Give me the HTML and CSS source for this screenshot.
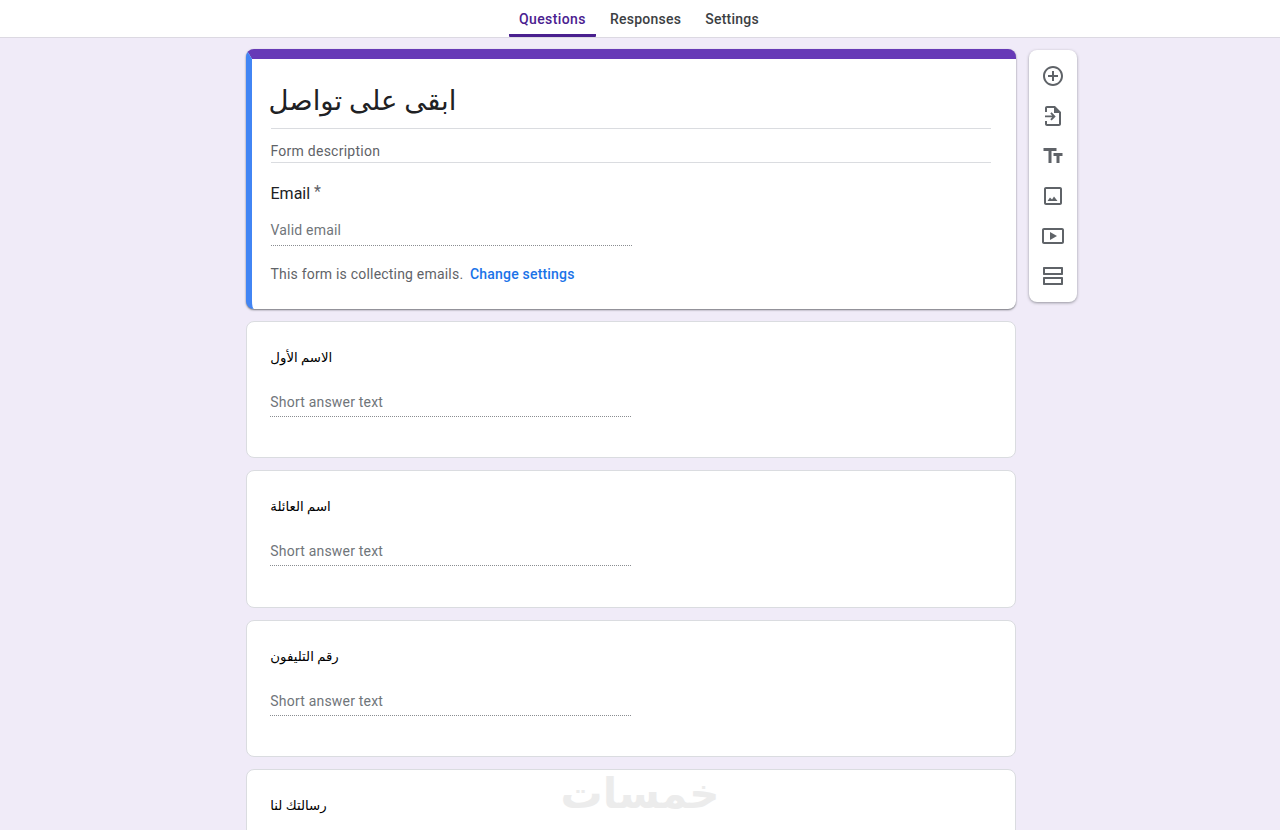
FILE: index.html
```html
<!DOCTYPE html>
<html lang="en">
<head>
    <meta charset="UTF-8">
    <meta name="viewport" content="width=device-width, initial-scale=1.0">
    <title>ابقى على تواصل - Google Forms</title>
    <link rel="stylesheet" href="styles.css">
</head>
<body>

<header class="tabs">
    <a class="tab active">Questions</a>
    <a class="tab">Responses</a>
    <a class="tab">Settings</a>
</header>

<main class="editor">
    <div class="cards">
        <section class="card title-card">
            <h1 class="form-title" dir="rtl"><span class="form-title-text">ابقى على تواصل</span></h1>
            <div class="form-desc">Form description</div>
            <div class="email-label">Email <span class="star">*</span></div>
            <div class="answer email-answer">Valid email</div>
            <p class="collecting">This form is collecting emails. <a class="link">Change settings</a></p>
        </section>

        <section class="card question">
            <div class="q-title" dir="rtl">الاسم الأول</div>
            <div class="answer">Short answer text</div>
        </section>

        <section class="card question">
            <div class="q-title" dir="rtl">اسم العائلة</div>
            <div class="answer">Short answer text</div>
        </section>

        <section class="card question">
            <div class="q-title" dir="rtl">رقم التليفون</div>
            <div class="answer">Short answer text</div>
        </section>

        <section class="card question">
            <div class="q-title" dir="rtl">رسالتك لنا</div>
        </section>
    </div>

    <aside class="toolbar">
        <svg class="tool" viewBox="0 0 24 24"><path d="M13 7h-2v4H7v2h4v4h2v-4h4v-2h-4V7zm-1-5C6.48 2 2 6.48 2 12s4.48 10 10 10 10-4.48 10-10S17.52 2 12 2zm0 18c-4.41 0-8-3.59-8-8s3.59-8 8-8 8 3.59 8 8-3.59 8-8 8z"/></svg>
        <svg class="tool" viewBox="0 0 24 24"><path d="M14 2H6c-1.100 0-2 .9-2 2v4h2V4h7v5h5v11H6v-3H4v3c0 1.100.9 2 2 2h12c1.100 0 2-.9 2-2V8l-6-6z"/><path d="M4 12h7.200l-1.900-1.900 1.300-1.300 4.100 4.100-4.100 4.100-1.300-1.300 1.900-1.900H4z" transform="translate(0 -.5)"/></svg>
        <svg class="tool" viewBox="0 0 24 24"><path d="M2.500 4v3h5v12h3V7h5V4h-13zm19 5h-9v3h3v7h3v-7h3V9z"/></svg>
        <svg class="tool" viewBox="0 0 24 24"><path d="M19 3H5c-1.100 0-2 .9-2 2v14c0 1.100.9 2 2 2h14c1.100 0 2-.9 2-2V5c0-1.100-.9-2-2-2zm0 16H5V5h14v14z"/><path d="M6.500 17l2.500-3.500 2 2 2-3 3.500 4.500z"/></svg>
        <svg class="tool" viewBox="0 0 24 24"><path d="M21 4H3c-1.100 0-2 .9-2 2v12c0 1.100.9 2 2 2h18c1.100 0 2-.9 2-2V6c0-1.100-.9-2-2-2zm0 14H3V6h18v12z"/><path d="M9 8v8l7-4z"/></svg>
        <svg class="tool" viewBox="0 0 24 24"><path d="M3 3h18c.6 0 1 .4 1 1v6c0 .6-.4 1-1 1H3c-.6 0-1-.4-1-1V4c0-.6.4-1 1-1zm1 2v4h16V5H4zM3 13h18c.6 0 1 .4 1 1v6c0 .6-.4 1-1 1H3c-.6 0-1-.4-1-1v-6c0-.6.4-1 1-1zm1 2v4h16v-4H4z"/></svg>
    </aside>
</main>

<div class="watermark" dir="rtl">خمسات</div>

</body>
</html>
```

FILE: styles.css
```css
:root {
    --primary-color: #673ab7;
    --tab-active: #4a208f;
    --background-color: #f0ebf8;
    --line-color: #dadce0;
    --text-color: #202124;
    --muted-color: #5f6368;
    --font-family: Roboto, 'DejaVu Sans', sans-serif;
}

html {
    overflow: hidden;
}

body {
    font-family: var(--font-family);
    background-color: var(--background-color);
    color: var(--text-color);
    margin: 0;
    height: 830px;
    overflow: hidden;
}

.tabs {
    display: flex;
    justify-content: center;
    gap: 4px;
    height: 37px;
    padding-right: 2px;
    background-color: white;
    border-bottom: 1px solid #dcd9e2;
}

.tab {
    display: block;
    padding: 11px 10px 0;
    height: 26px;
    font-size: 14px;
    line-height: 16px;
    font-weight: 500;
    letter-spacing: 0.25px;
    color: #3c4043;
}

.tab.active {
    color: var(--tab-active);
    letter-spacing: 0.4px;
    border-bottom: 3px solid var(--tab-active);
    border-radius: 0 0 1px 1px;
    height: 23px;
}

.editor {
    display: flex;
    align-items: flex-start;
    gap: 13px;
    margin-left: 246px;
    padding-top: 11px;
}

.cards {
    display: flex;
    flex-direction: column;
    gap: 12px;
    width: 770px;
}

.card {
    background-color: white;
    border: 1px solid var(--line-color);
    border-radius: 8px;
    box-sizing: border-box;
    padding: 0 23.3px;
}

.title-card {
    height: 260px;
    padding: 10px 25px 0 18.5px;
    border: 0;
    border-top: 10px solid var(--primary-color);
    border-left: 6px solid #4285f4;
    box-shadow: 0 1px 2px rgba(60, 64, 67, 0.7);
}

.form-title {
    margin: 0;
    height: 60px;
    box-sizing: border-box;
    padding-top: 9px;
    font-size: 27.5px;
    line-height: 46px;
    font-weight: 400;
    direction: rtl;
    border-bottom: 1px solid var(--line-color);
    display: flex;
    justify-content: flex-end;
}

.form-title-text {
    margin-left: -2px;
}

.form-desc {
    height: 34px;
    box-sizing: border-box;
    padding-top: 14px;
    font-size: 14px;
    line-height: 16px;
    letter-spacing: 0.25px;
    color: var(--muted-color);
    border-bottom: 1px solid var(--line-color);
}

.email-label {
    margin-top: 19px;
    font-size: 16px;
    line-height: 20px;
}

.star {
    color: var(--muted-color);
    vertical-align: 2px;
}

.answer {
    width: 361px;
    height: 23px;
    box-sizing: border-box;
    font-size: 14px;
    line-height: 16px;
    letter-spacing: 0.2px;
    color: #70757a;
    border-bottom: 1px dotted #8a8d91;
}

.email-answer {
    height: 24px;
    margin-top: 18px;
}

.collecting {
    margin: 20px 0 0;
    font-size: 14px;
    line-height: 16px;
    letter-spacing: 0.2px;
    color: var(--muted-color);
}

.link {
    margin-left: 3px;
    font-weight: 500;
    color: #1a73e8;
}

.question {
    height: 137.33px;
    padding-top: 26px;
}

.q-title {
    height: 31px;
    font-size: 13.3px;
    line-height: 20px;
    color: #000;
    display: flex;
    justify-content: flex-end;
    direction: rtl;
    margin-bottom: 15px;
}

.toolbar {
    display: flex;
    flex-direction: column;
    align-items: center;
    width: 48px;
    height: 252px;
    margin-top: 1px;
    padding: 6px 0;
    box-sizing: border-box;
    background-color: white;
    border-radius: 8px;
    box-shadow: 0 1px 3px rgba(60, 64, 67, 0.5);
}

.tool {
    width: 24px;
    height: 24px;
    padding: 8px 0;
    fill: var(--muted-color);
}

.watermark {
    position: absolute;
    left: 540px;
    top: 768px;
    width: 200px;
    text-align: center;
    font-size: 42px;
    font-weight: 700;
    line-height: 52px;
    color: #ececec;
}
```
